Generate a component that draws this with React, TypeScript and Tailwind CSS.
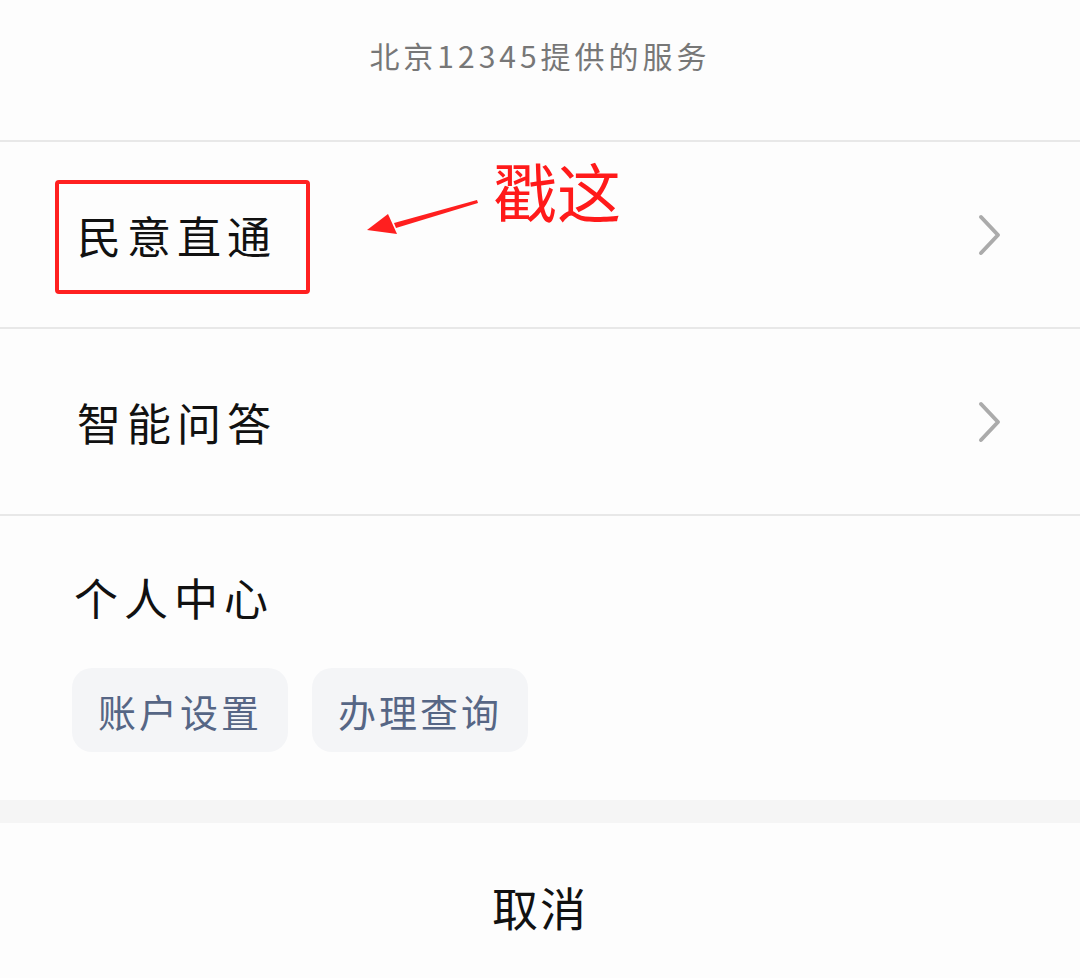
const cjk = { fontFamily: '"Noto Sans CJK SC", "Noto Sans", sans-serif' };

function Chevron() {
  return (
    <svg width="26" height="42" viewBox="0 0 26 42" fill="none">
      <path d="M4 3 L21 21 L4 39" stroke="#ababab" strokeWidth="4" strokeLinecap="round" strokeLinejoin="round" />
    </svg>
  );
}

function MenuRow({ label, children }: { label: string; children?: React.ReactNode }) {
  return (
    <div className="relative flex h-[187px] items-center justify-between border-b-2 border-[#e8e8e8] pl-[77px] pr-[77px]">
      <span className="text-[44px] leading-none tracking-[6px] text-[#111111]">{label}</span>
      <Chevron />
      {children}
    </div>
  );
}

export default function App() {
  return (
    <div className="min-h-screen w-[1080px] bg-[#fdfdfd]" style={cjk}>
      {/* Title */}
      <div className="flex h-[142px] justify-center border-b-2 border-[#e8e8e8] pt-[34px]">
        <span className="text-[30px] leading-[42px] tracking-[4px] text-[#777777]">
          北京12345提供的服务
        </span>
      </div>

      <MenuRow label="民意直通">
        {/* annotation */}
        <div className="pointer-events-none absolute left-[55px] top-[38px] h-[114px] w-[255px] rounded-[4px] border-4 border-[#ff2020]" />
        <svg className="absolute left-[360px] top-[50px]" width="124" height="44" viewBox="0 0 124 44">
          <path d="M117 8 L34 31 L36 36 L118 11 Z" fill="#ff1f1f" />
          <path d="M7 38 L28 22 L37 42 Z" fill="#ff1f1f" />
        </svg>
        <span className="absolute left-[493px] top-[15px] text-[64px] leading-none text-[#ff1a1a]">戳这</span>
      </MenuRow>

      <MenuRow label="智能问答" />

      {/* Personal center */}
      <div className="h-[284px] px-[74px] pt-[59px]">
        <div className="text-[44px] leading-none tracking-[6px] text-[#111111]">个人中心</div>
        <div className="-ml-[2px] mt-[49px] flex gap-[24px]">
          <button className="h-[84px] w-[216px] rounded-[20px] bg-[#f4f5f7] text-[38px] tracking-[3px] text-[#566685]">
            账户设置
          </button>
          <button className="h-[84px] w-[216px] rounded-[20px] bg-[#f4f5f7] text-[38px] tracking-[3px] text-[#566685]">
            办理查询
          </button>
        </div>
      </div>

      <div className="h-[23px] bg-[#f5f5f5]" />

      {/* Cancel */}
      <div className="flex h-[155px] justify-center pt-[60px]">
        <span className="text-[46px] leading-none tracking-[2px] text-[#111111]">取消</span>
      </div>
    </div>
  );
}
